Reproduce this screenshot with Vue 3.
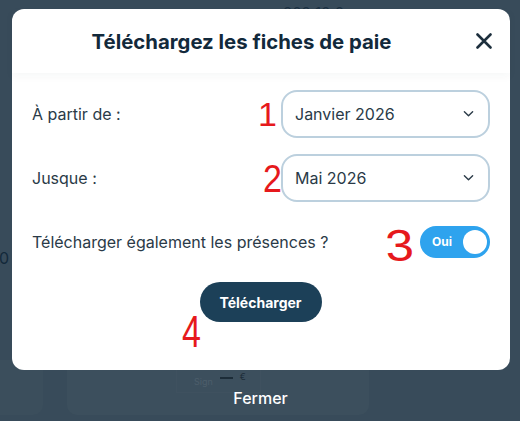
<script setup>
const rows = [
  { label: 'À partir de :', value: 'Janvier 2026' },
  { label: 'Jusque :', value: 'Mai 2026' }
]
</script>

<template>
  <div class="page">
    <div class="ghost-zero">0</div>
    <div class="ghost-top">202 10 0</div>
    <div class="ghost-side"></div>
    <div class="ghost-card">
      <div class="ghost-row"><span class="ghost-sign">Sign</span><span class="ghost-dash"></span><span class="ghost-euro">€</span></div>
    </div>
    <div class="modal">
      <header class="head">
        <h1>Téléchargez les fiches de paie</h1>
        <svg class="close" viewBox="0 0 16 16" width="16" height="16">
          <path d="M1.5 1.5 14.5 14.5M14.5 1.5 1.5 14.5" />
        </svg>
      </header>
      <div class="body">
        <div v-for="r in rows" :key="r.label" class="row">
          <label>{{ r.label }}</label>
          <div class="select">
            <span>{{ r.value }}</span>
            <svg viewBox="0 0 12 8" width="12" height="8"><path d="M1.5 1.5 6 6 10.5 1.5" /></svg>
          </div>
        </div>
        <div class="row toggle-row">
          <label>Télécharger également les présences ?</label>
          <div class="toggle"><span>Oui</span><i></i></div>
        </div>
        <div class="actions"><button type="button">Télécharger</button></div>
      </div>
      <span class="mark m1">1</span>
      <span class="mark m2">2</span>
      <span class="mark m3">3</span>
      <span class="mark m4">4</span>
    </div>
    <div class="fermer">Fermer</div>
  </div>
</template>

<style>
html, body { margin: 0; background: #384b5a; }
</style>

<style scoped>
.page {
  position: relative;
  width: 520px;
  height: 421px;
  overflow: hidden;
  background: #384b5a;
  font-family: Inter, "Liberation Sans", sans-serif;
  padding-top: 9px;
  box-sizing: border-box;
}
.ghost-zero {
  position: absolute;
  left: -1px;
  top: 248px;
  font-size: 16px;
  color: #13293a;
}
.ghost-top {
  position: absolute;
  left: 283px;
  top: 3px;
  font-size: 15px;
  color: #1c3142;
}
.ghost-side {
  position: absolute;
  left: 0;
  top: 360px;
  width: 43px;
  height: 55px;
  background: #3b4e5c;
  border-bottom-right-radius: 10px;
}
.ghost-card {
  position: absolute;
  left: 67px;
  top: 360px;
  width: 302px;
  height: 55px;
  background: #3c4f5d;
  border-radius: 10px;
}
.ghost-row {
  position: absolute;
  left: 109px;
  top: 10px;
  width: 85px;
  height: 23px;
  display: flex;
  align-items: flex-start;
  gap: 7px;
  padding-left: 17px;
  box-sizing: border-box;
  border: 1px solid #3f515f;
  border-top: 0;
  font-size: 9px;
  color: #1c2c38;
}
.ghost-sign { color: #4d5e6b; margin-top: 6px; }
.ghost-dash { width: 13px; height: 2px; background: #1c2c38; margin-top: 7px; }
.ghost-euro { margin-top: 1px; }
.modal {
  position: relative;
  width: 498px;
  height: 361px;
  margin-left: 12px;
  background: #fff;
  border-radius: 12px;
}
.head {
  height: 64px;
  display: flex;
  align-items: center;
  justify-content: center;
  padding-right: 39px;
  box-shadow: 0 4px 8px rgba(30, 50, 70, 0.035);
  position: relative;
}
h1 {
  margin: 0;
  font-size: 20.35px;
  font-weight: 700;
  color: #12293b;
}
.close {
  position: absolute;
  right: 18px;
  top: 24px;
}
.close path {
  fill: none;
  stroke: #1d2f3d;
  stroke-width: 2.6;
  stroke-linecap: round;
}
.body {
  padding: 17px 20px 0 20px;
  display: flex;
  flex-direction: column;
  gap: 16px;
}
.row {
  display: flex;
  align-items: center;
  justify-content: space-between;
  height: 48px;
  font-size: 16px;
  color: #2a3a47;
}
.select {
  width: 209px;
  height: 48px;
  box-sizing: border-box;
  border: 2px solid #bcd0de;
  border-radius: 16px;
  padding: 0 14px 0 12px;
  display: flex;
  align-items: center;
  justify-content: space-between;
  background: #fff;
}
.select svg { width: 11px; }
.select path {
  fill: none;
  stroke: #2a3a47;
  stroke-width: 1.5;
  stroke-linecap: round;
  stroke-linejoin: round;
}
.toggle-row {
  height: 32px;
  margin-top: 8px;
}
.toggle {
  width: 70px;
  height: 32px;
  border-radius: 16px;
  background: #2ea3ee;
  position: relative;
  display: flex;
  align-items: center;
  color: #fff;
  font-size: 12px;
  font-weight: 700;
}
.toggle span { margin-left: 12px; margin-top: -1px; }
.toggle i {
  position: absolute;
  right: 3px;
  top: 4px;
  width: 24px;
  height: 24px;
  border-radius: 50%;
  background: #fff;
}
.actions {
  display: flex;
  justify-content: center;
  margin-top: 8px;
  padding-right: 1px;
}
button {
  width: 122px;
  height: 40px;
  border: 0;
  border-radius: 20px;
  background: #1c4058;
  color: #fff;
  font-family: inherit;
  font-size: 14px;
  font-weight: 700;
  padding: 0;
}
.mark {
  position: absolute;
  color: #e6191c;
  font-family: "Liberation Sans", sans-serif;
  line-height: 1;
  font-size: 34px;
}
.m1 { left: 246px; top: 88px; }
.m2 { left: 251px; top: 152px; transform: scaleY(1.15); }
.m3 { left: 378px; top: 219px; transform: scale(1.5, 1.3) rotate(-3deg); }
.m4 { left: 170px; top: 305px; transform: scaleY(1.3); }
.fermer {
  position: absolute;
  left: 0;
  right: 0;
  top: 388px;
  padding-left: 1px;
  text-align: center;
  color: #fff;
  font-size: 16px;
  font-weight: 500;
}
</style>
